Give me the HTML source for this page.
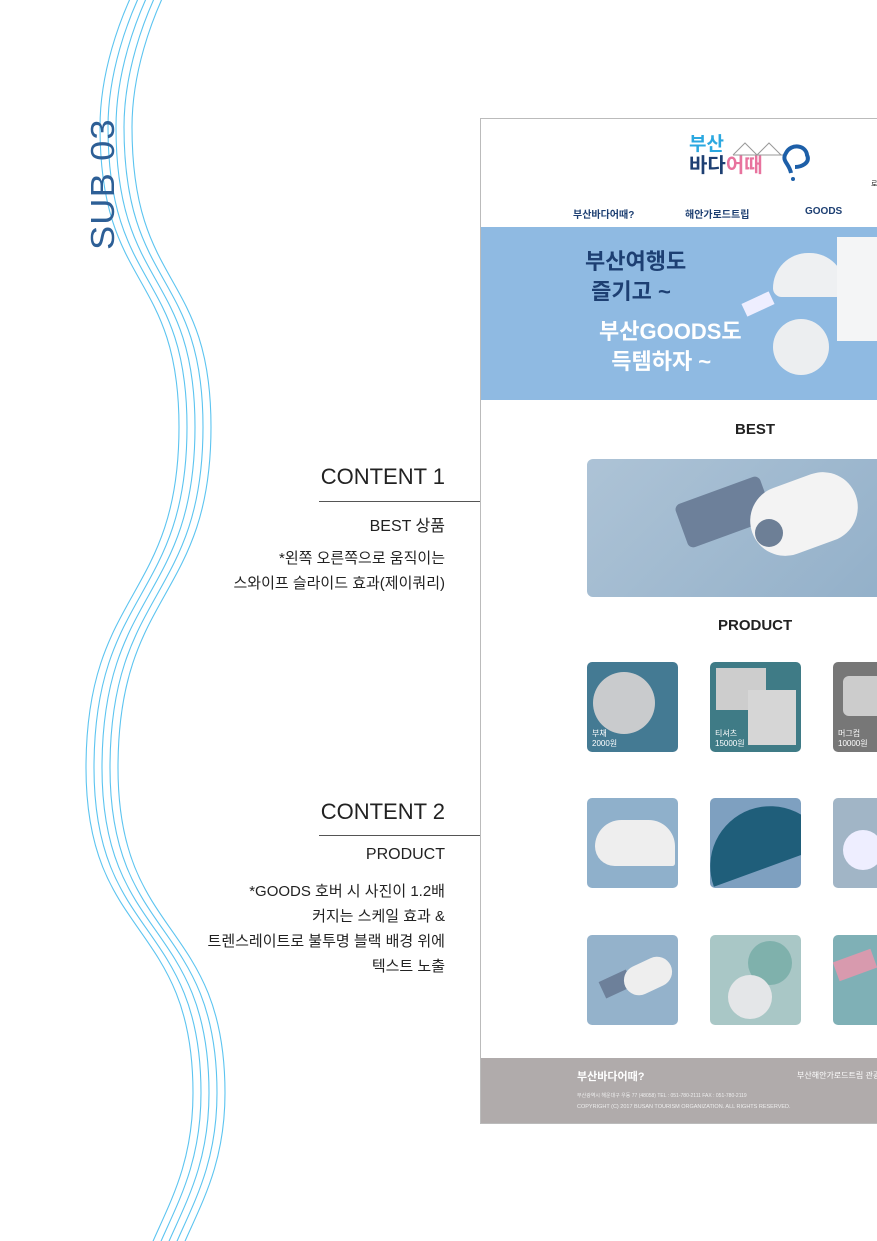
<!DOCTYPE html>
<html><head><meta charset="utf-8"><style>
*{margin:0;padding:0;box-sizing:border-box}
body{width:877px;height:1241px;overflow:hidden;background:#fff;position:relative;font-family:"Liberation Sans","Noto Sans CJK KR",sans-serif;color:#222}
.a{position:absolute}
.r{text-align:right;right:432px;white-space:nowrap}
.tile{position:absolute;width:91px;height:90px;border-radius:5px;overflow:hidden}
.cap{position:absolute;left:5px;bottom:3px;color:#fff;font-size:8px;line-height:10px}
</style></head><body>
<svg class="a" style="left:0;top:0" width="300" height="1241">
<g fill="none" stroke="#5cc4f0" stroke-width="1.1">
<path id="w" d="M150,-40 C115,20 100,80 100,127 C100,290 179,270 179,427 C179,600 86,590 86,768 C86,940 193,920 193,1093 C193,1170 165,1210 145,1260"/>
<use href="#w" x="8"/><use href="#w" x="16"/><use href="#w" x="24"/><use href="#w" x="32"/>
</g>
<text x="0" y="0" transform="translate(114,250) rotate(-90) scale(1.1,1)" font-family="Liberation Sans Narrow, Liberation Sans, sans-serif" font-size="33" fill="#2d5f96" letter-spacing="1">SUB 03</text>
</svg>

<div class="a r" style="top:464px;font-size:22px;color:#222">CONTENT 1</div>
<div class="a" style="left:319px;top:501px;width:161px;height:1px;background:#555"></div>
<div class="a r" style="top:512px;font-size:16px">BEST 상품</div>
<div class="a r" style="top:546px;font-size:15px;line-height:25px">*왼쪽 오른쪽으로 움직이는<br>스와이프 슬라이드 효과(제이쿼리)</div>

<div class="a r" style="top:799px;font-size:22px;color:#222">CONTENT 2</div>
<div class="a" style="left:319px;top:835px;width:161px;height:1px;background:#555"></div>
<div class="a r" style="top:846px;font-size:16px">PRODUCT</div>
<div class="a r" style="top:879px;font-size:15px;line-height:25px">*GOODS 호버 시 사진이 1.2배<br>커지는 스케일 효과 &amp;<br>트렌스레이트로 불투명 블랙 배경 위에<br>텍스트 노출</div>

<div class="a" style="left:480px;top:118px;width:400px;height:1006px;border:1px solid #bbb;background:#fff;overflow:hidden">
 <div class="a" style="left:208px;top:16px;font-size:19px;font-weight:bold;line-height:20px;color:#2ba8e0">부산</div>
 <div class="a" style="left:208px;top:36px;font-size:20px;font-weight:bold;line-height:22px;color:#1d3f72">바다<span style="color:#e8739e">어때</span></div>
 <svg class="a" style="left:250px;top:14px" width="85" height="50"><path d="M2,22 L14,10 L26,22 L38,10 L50,22 M2,22 H52" stroke="#999" fill="none"/><path d="M60,40 C58,30 50,28 55,20 C60,10 75,12 76,22 C80,30 70,34 64,34" stroke="#1d5fa8" stroke-width="4" fill="none"/><circle cx="62" cy="46" r="2" fill="#1d5fa8"/></svg>
 <div class="a" style="left:390px;top:60px;font-size:7px">로</div>
 <div class="a" style="left:92px;top:87px;font-size:10px;color:#1d3f72;font-weight:bold">부산바다어때?</div>
 <div class="a" style="left:204px;top:87px;font-size:10px;color:#1d3f72;font-weight:bold">해안가로드트립</div>
 <div class="a" style="left:324px;top:87px;font-size:10px;color:#1d3f72;font-weight:bold">GOODS</div>
 <div class="a" style="left:0;top:108px;width:400px;height:173px;background:#8fbae2">
  <div class="a" style="left:104px;top:20px;font-size:22px;font-weight:bold;color:#1d3f72;line-height:30px">부산여행도<br>&nbsp;즐기고 ~</div>
  <div class="a" style="left:118px;top:90px;font-size:22px;font-weight:bold;color:#fff;line-height:30px">부산GOODS도<br>&nbsp;&nbsp;득템하자 ~</div>
  <div class="a" style="left:292px;top:26px;width:72px;height:44px;background:#eef0f2;border-radius:40px 40px 10px 10px"></div>
  <div class="a" style="left:356px;top:10px;width:50px;height:104px;background:#f4f5f6"></div>
  <div class="a" style="left:262px;top:70px;width:30px;height:14px;background:#eef;transform:rotate(-25deg)"></div>
  <div class="a" style="left:292px;top:92px;width:56px;height:56px;border-radius:50%;background:#eceef0"></div>
 </div>
 <div class="a" style="left:254px;top:302px;font-size:15px;font-weight:bold">BEST</div>
 <div class="a" style="left:106px;top:340px;width:300px;height:138px;border-radius:6px;background:linear-gradient(135deg,#adc3d6,#93b0c9)">
  <div class="a" style="left:92px;top:30px;width:90px;height:46px;background:#6d809a;border-radius:6px;transform:rotate(-20deg)"></div>
  <div class="a" style="left:162px;top:20px;width:110px;height:70px;background:#f3f3f3;border-radius:36px;transform:rotate(-20deg)"></div>
  <div class="a" style="left:168px;top:60px;width:28px;height:28px;border-radius:50%;background:#6d7f96"></div>
 </div>
 <div class="a" style="left:237px;top:498px;font-size:15px;font-weight:bold">PRODUCT</div>
 <div class="tile" style="left:106px;top:543px;background:#447a93"><div class="a" style="left:6px;top:10px;width:62px;height:62px;border-radius:50%;background:#c9cbcd"></div><div class="cap">부채<br>2000원</div></div>
 <div class="tile" style="left:229px;top:543px;background:#3f7b86"><div class="a" style="left:6px;top:6px;width:50px;height:42px;background:#cdcdcd"></div><div class="a" style="left:38px;top:28px;width:48px;height:55px;background:#d6d6d6"></div><div class="cap">티셔츠<br>15000원</div></div>
 <div class="tile" style="left:352px;top:543px;background:#777"><div class="a" style="left:10px;top:14px;width:40px;height:40px;background:#ccc;border-radius:6px"></div><div class="cap">머그컵<br>10000원</div></div>
 <div class="tile" style="left:106px;top:679px;background:#8fb0cb"><div class="a" style="left:8px;top:22px;width:80px;height:46px;background:#eeeeee;border-radius:40px 40px 4px 30px"></div></div>
 <div class="tile" style="left:229px;top:679px;background:#7ea0c0"><div class="a" style="left:-10px;top:10px;width:120px;height:60px;background:#1f5e7a;border-radius:60px 60px 0 0;transform:rotate(-20deg)"></div></div>
 <div class="tile" style="left:352px;top:679px;background:#a1b5c6"><div class="a" style="left:10px;top:32px;width:40px;height:40px;border-radius:50%;background:#eef"></div></div>
 <div class="tile" style="left:106px;top:816px;background:#94b2cb"><div class="a" style="left:14px;top:40px;width:30px;height:18px;background:#6d809a;transform:rotate(-25deg)"></div><div class="a" style="left:36px;top:26px;width:50px;height:30px;background:#eee;border-radius:16px;transform:rotate(-25deg)"></div></div>
 <div class="tile" style="left:229px;top:816px;background:#a9c7c6"><div class="a" style="left:38px;top:6px;width:44px;height:44px;border-radius:50%;background:#7fb1ac"></div><div class="a" style="left:18px;top:40px;width:44px;height:44px;border-radius:50%;background:#e4e6e8"></div></div>
 <div class="tile" style="left:352px;top:816px;background:#7fb0b6"><div class="a" style="left:2px;top:20px;width:40px;height:20px;background:#d89aae;transform:rotate(-20deg)"></div></div>
 <div class="a" style="left:0;top:939px;width:400px;height:67px;background:#b0abab">
  <div class="a" style="left:96px;top:10px;font-size:11px;font-weight:bold;color:#fff">부산바다어때?</div>
  <div class="a" style="left:316px;top:12px;font-size:8px;color:#fff;white-space:nowrap">부산해안가로드트립 관광</div>
  <div class="a" style="left:96px;top:34px;font-size:5px;color:#eee;white-space:nowrap">부산광역시 해운대구 우동 77 (48058) TEL : 051-780-2111 FAX : 051-780-2119</div>
  <div class="a" style="left:96px;top:46px;font-size:5.5px;color:#eee;white-space:nowrap">COPYRIGHT (C) 2017 BUSAN TOURISM ORGANIZATION. ALL RIGHTS RESERVED.</div>
 </div>
</div>
</body></html>
